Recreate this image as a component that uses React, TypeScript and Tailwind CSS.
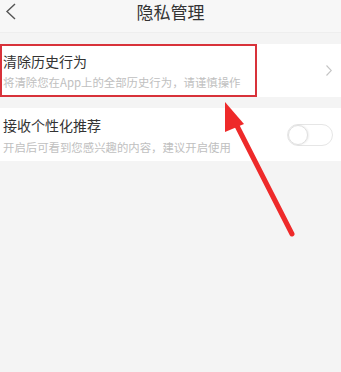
import React from 'react';

export default function App() {
  return (
    <div
      className="relative w-[341px] h-[372px] overflow-hidden bg-[#f4f4f4]"
      style={{ fontFamily: '"Noto Sans CJK SC", "Noto Sans", sans-serif' }}
    >
      {/* header */}
      <div className="relative flex h-[33px] items-start justify-center bg-[#f7f7f7] border-b border-[#eeeeee] pt-[2px]">
        <svg className="absolute left-[5px] top-[3px]" width="12" height="17" viewBox="0 0 12 17">
          <path d="M10 1 L2 8.5 L10 16" fill="none" stroke="#555" strokeWidth="1.4" />
        </svg>
        <span className="text-[17px] text-[#333] leading-[20px]">隐私管理</span>
      </div>

      <div className="h-[11px]" />

      {/* clear history */}
      <div className="relative flex h-[53px] items-center bg-white pl-[3px] pr-[9px]">
        <div className="flex flex-1 flex-col">
          <span className="text-[14px] leading-[18px] text-[#333]">清除历史行为</span>
          <span className="mt-[5px] text-[11.4px] leading-[14px] text-[#c0c0c0]">将清除您在App上的全部历史行为，请谨慎操作</span>
        </div>
        <svg width="6" height="11" viewBox="0 0 6 11">
          <path d="M0.5 0.5 L5.3 5.5 L0.5 10.5" fill="none" stroke="#c4c4c4" strokeWidth="1.1" />
        </svg>
        <div className="absolute left-0 top-0 h-[53px] w-[257px] border-2 border-[#d8323a]" />
      </div>

      <div className="h-[11px]" />

      {/* recommendation */}
      <div className="flex h-[53px] items-center bg-white pl-[3px] pr-[8px]">
        <div className="flex flex-1 flex-col">
          <span className="text-[14px] leading-[18px] text-[#333]">接收个性化推荐</span>
          <span className="mt-[6px] text-[11.4px] leading-[14px] text-[#c0c0c0]">开启后可看到您感兴趣的内容，建议开启使用</span>
        </div>
        <div className="relative h-[22px] w-[46px] rounded-full border border-[#e6e6e6] bg-white">
          <div className="absolute left-0 top-0 h-[20px] w-[20px] rounded-full border border-[#e0e0e0] bg-white shadow-[1px_0_2px_rgba(0,0,0,0.08)]" />
        </div>
      </div>

      {/* annotation arrow */}
      <svg className="absolute left-0 top-0" width="341" height="372" viewBox="0 0 341 372">
        <line x1="292" y1="234" x2="233" y2="118" stroke="#ee2a2a" strokeWidth="5" strokeLinecap="round" />
        <polygon points="225,102 244,124 225,132" fill="#ee2a2a" />
      </svg>
    </div>
  );
}
